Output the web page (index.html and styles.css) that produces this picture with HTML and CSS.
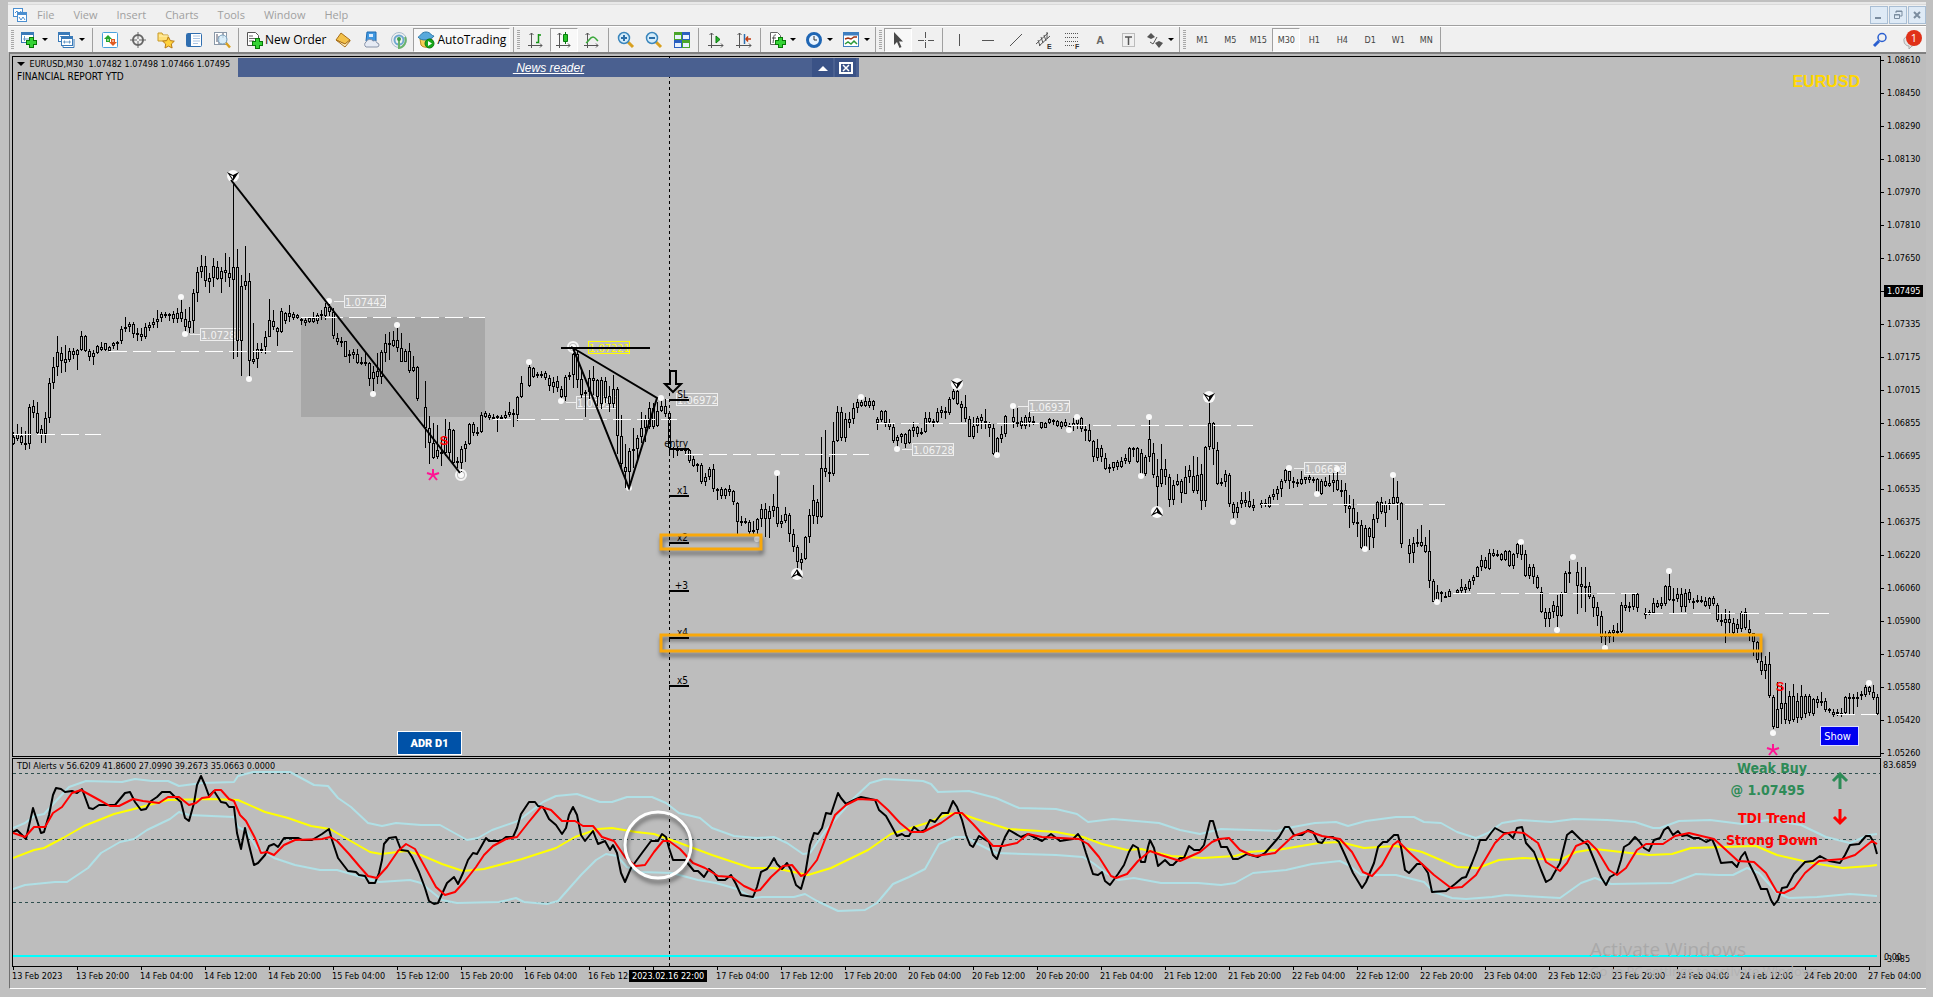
FILE: index.html
```html
<!DOCTYPE html>
<html lang="en">
<head>
    <meta charset="utf-8">
    <title>EURUSD,M30</title>
    <link rel="stylesheet" href="styles.css">
</head>
<body>
    <header class="app-bar">
        <nav class="menu">
            <svg class="app-icon" width="14" height="14" viewBox="0 0 14 14" fill="#fff" stroke="#4b8fd0"><rect x=".5" y=".5" width="9" height="8"/><path d="M2 5l2-2 2 3 2-3" fill="none"/><rect x="4.500" y="4.500" width="9" height="9"/><path d="M4 6h10" stroke-width="2"/><path d="M6 9l2 3 2-3 2 3" fill="none"/></svg>
            <a href="#">File</a>
            <a href="#">View</a>
            <a href="#">Insert</a>
            <a href="#">Charts</a>
            <a href="#">Tools</a>
            <a href="#">Window</a>
            <a href="#">Help</a>
            <div class="win-controls">
                <button aria-label="Minimize"><svg width="12" height="12"><path d="M2 9h6" stroke="#7b8da0" stroke-width="2"/></svg></button>
                <button aria-label="Restore"><svg width="12" height="12" fill="none" stroke="#7b8da0"><path d="M4 4V2h6v5H8M4 2.500h6"/><path d="M2.500 5.500h5v4h-5zM2 6h6"/></svg></button>
                <button aria-label="Close"><svg width="12" height="12"><path d="M3 3l6 6M9 3l-6 6" stroke="#7b8da0" stroke-width="2"/></svg></button>
            </div>
        </nav>

        <div class="toolbars">
            <div class="toolbar">
                <button class="tool drop" aria-label="New chart"><svg width="18" height="18"><rect x="1.500" y="1.500" width="12" height="10" fill="#fff" stroke="#3a7ab8"/><path d="M1 3h13" stroke="#3a7ab8" stroke-width="2"/><path d="M4.500 5v5M3 8h6" stroke="#6a9cc8"/><path d="M11.500 6v11M6 11.500h11" stroke="#087808" stroke-width="5"/><path d="M11.500 7v9M7 11.500h9" stroke="#35d335" stroke-width="3"/></svg></button>
                <button class="tool drop" aria-label="Profiles"><svg width="18" height="18" fill="#fff" stroke="#3a7ab8"><rect x="1.500" y="1.500" width="11" height="9"/><path d="M1 3h12" stroke-width="2"/><path d="M6 14v2.500h11V8" /><rect x="4.500" y="5.500" width="11" height="9"/><path d="M4 7h12" stroke-width="2"/><path d="M3 5.500h1M6 11h8M7.500 9.500v3M12.500 9.500v3" stroke="#6a9cc8"/></svg></button>
                <i class="sep"></i>
                <button class="tool" aria-label="Market Watch"><svg width="18" height="18"><rect x="1.500" y="1.500" width="15" height="15" rx="1" fill="#fff" stroke="#4ba0dc"/><path d="M7 4l4 4H9v3H5V8H3z" fill="#25a52a"/><path d="M10 8h4v3h2l-4 4-4-4h2z" fill="#e05a20"/><path d="M6 9h2M11 10h2" stroke="#fff"/></svg></button>
                <button class="tool" aria-label="Data Window"><svg width="18" height="18" fill="none" stroke="#666"><circle cx="9" cy="9" r="5" stroke-width="2"/><path d="M9 1v7M9 10v7M1 9h7M10 9h7"/></svg></button>
                <button class="tool" aria-label="Navigator"><svg width="18" height="18"><path d="M1 2h4l1 2h5v6H1z" fill="#ffe07a" stroke="#c89a28"/><path d="M2 5h9" stroke="#fff2b8"/><path d="M11.500 6l1.800 3.600 4 .6-3 2.800.8 4-3.600-1.900L8 17l.7-4-3-2.800 4-.6z" fill="#ffd23c" stroke="#b87a14"/></svg></button>
                <button class="tool" aria-label="Terminal"><svg width="18" height="18"><rect x="1.500" y="2.500" width="15" height="13" rx="1" fill="#fff" stroke="#2f6eb0"/><path d="M4 3v12" stroke="#2f6eb0" stroke-width="4"/><path d="M8 5h7M8 7.500h7M8 10h7M8 12.500h5" stroke="#a8c4e4"/></svg></button>
                <button class="tool" aria-label="Strategy Tester"><svg width="18" height="18"><rect x="1.500" y="1.500" width="12" height="12" fill="#fff" stroke="#8a98a8"/><path d="M4 3v8M6 5v8M10 2v5" stroke="#556"/><circle cx="9.500" cy="8.500" r="4.500" fill="#cfe8f8" fill-opacity=".8" stroke="#7aa0bc"/><path d="M13 12l4 4.500" stroke="#d8a020" stroke-width="2.500"/></svg></button>
                <i class="sep"></i>
                <button class="tool wide"><svg width="18" height="18"><path d="M2.500 1.500h8l3 3v10h-11z" fill="#fff" stroke="#555"/><path d="M4 5h4M4 7.500h7M4 10h5" stroke="#666"/><path d="M12.500 7v11M7 12.500h11" stroke="#087808" stroke-width="5"/><path d="M12.500 8v9M8 12.500h9" stroke="#35d335" stroke-width="3"/></svg>New Order</button>
                <button class="tool" aria-label="MetaEditor"><svg width="18" height="18"><path d="M2 9l5-7 9 7-5 4z" fill="#f3c14a" stroke="#a9701a"/><path d="M2 9l9 7 5-6v-1l-5 4z" fill="#fff0c0" stroke="#a9701a"/></svg></button>
                <button class="tool" aria-label="Cloud storage"><svg width="18" height="18"><path d="M5 1h9v9H4z" fill="#3f97e0" stroke="#1f6bb0"/><path d="M7 3h4v3H7z" fill="#d8ecff"/><path d="M4 16a3 3 0 0 1 0-5 4 4 0 0 1 7-1 3 3 0 0 1 4 2 2 2 0 0 1 0 4z" fill="#e6ebf4" stroke="#8893a8"/></svg></button>
                <button class="tool" aria-label="Signals"><svg width="18" height="18" fill="none"><circle cx="9" cy="9" r="7.500" stroke="#a8bccc"/><circle cx="9" cy="9" r="4.500" stroke="#6fa8d0" stroke-width="2"/><path d="M9 9v8a8 8 0 0 0 6-11" stroke="#69b36c" stroke-width="2"/><circle cx="9" cy="8" r="2" fill="#3b9d4a"/></svg></button>
                <button class="tool wide pressed"><svg width="18" height="18"><path d="M3 8l1 6c2 3 8 3 10 0l1-6z" fill="#f5cf56" stroke="#b88a20"/><path d="M1 6c2 0 3-5 8-5s5 4 8 4c-2 4-13 6-16 1z" fill="#58a9dc" stroke="#2e78aa"/><circle cx="12.500" cy="12.500" r="4.500" fill="#18a818" stroke="#0a7a10"/><path d="M11 10v5l4-2.500z" fill="#fff"/></svg>AutoTrading</button>
            </div>

            <div class="toolbar">
                <button class="tool" aria-label="Bar chart"><svg width="18" height="18" fill="none" stroke="#555"><path d="M4.500 2v15M1 14.500h14M2.500 4l2-2 2 2M13 12.500l2 2-2 2"/><path d="M11.500 3v9M11 4h3M9 11.500h3" stroke="#159415" stroke-width="1.500"/></svg></button>
                <button class="tool pressed" aria-label="Candlesticks"><svg width="18" height="18" fill="none" stroke="#555"><path d="M4.500 2v15M1 14.500h14M2.500 4l2-2 2 2M13 12.500l2 2-2 2"/><path d="M10.500 1v12" stroke="#0a7a10"/><path d="M8.500 3.500h4v7h-4z" fill="#27c427" stroke="#0a7a10"/></svg></button>
                <button class="tool" aria-label="Line chart"><svg width="18" height="18" fill="none" stroke="#555"><path d="M4.500 2v15M1 14.500h14M2.500 4l2-2 2 2M13 12.500l2 2-2 2"/><path d="M3 12c3-2 4-6 7-6 2 0 3 2 5 4" stroke="#3aa83a" stroke-width="1.500"/></svg></button>
                <i class="sep"></i>
                <button class="tool" aria-label="Zoom in"><svg width="18" height="18"><path d="M11 11l5 5" stroke="#d8a020" stroke-width="3"/><circle cx="7" cy="7" r="5.500" fill="#d4ecfa" stroke="#3a86bc" stroke-width="1.500"/><path d="M4 7h6M7 4v6" stroke="#2b6fa8" stroke-width="2"/></svg></button>
                <button class="tool" aria-label="Zoom out"><svg width="18" height="18"><path d="M11 11l5 5" stroke="#d8a020" stroke-width="3"/><circle cx="7" cy="7" r="5.500" fill="#d4ecfa" stroke="#3a86bc" stroke-width="1.500"/><path d="M4 7h6" stroke="#2b6fa8" stroke-width="2"/></svg></button>
                <button class="tool" aria-label="Tile windows"><svg width="18" height="18"><path d="M1 1h8v8H1zM9 9h8v8H9z" fill="#4aa52a"/><path d="M9 1h8v8H9zM1 9h8v8H1z" fill="#2a5fc0"/><path d="M2 4h6v4H2zM10 4h6v4h-6zM2 12h6v4H2zM10 12h6v4h-6z" fill="#e8f2ff"/></svg></button>
                <i class="sep"></i>
                <button class="tool" aria-label="Auto scroll"><svg width="18" height="18" fill="none" stroke="#555"><path d="M4.500 2v15M1 14.500h15M2.500 4l2-2 2 2M14 12.500l2 2-2 2"/><path d="M9 5l4 3.500L9 12z" fill="#27b427" stroke="#0a7a10"/></svg></button>
                <button class="tool" aria-label="Chart shift"><svg width="18" height="18" fill="none" stroke="#555"><path d="M4.500 2v15M1 14.500h15M2.500 4l2-2 2 2M14 12.500l2 2-2 2"/><path d="M9.500 3v10" stroke="#2a6fb0" stroke-width="1.500"/><path d="M16 8h-5M13 5.500L11 8l2 2.500" stroke="#c03a10" stroke-width="1.500"/></svg></button>
                <i class="sep"></i>
                <button class="tool drop" aria-label="Indicators"><svg width="18" height="18"><path d="M2.500 1.500h7l3 3v9h-10z" fill="#fff" stroke="#666"/><path d="M8 4c-3-1-2 3-3 8M4 7h4" fill="none" stroke="#555"/><path d="M12.500 6v11M7 11.500h11" stroke="#087808" stroke-width="5"/><path d="M12.500 7v9M8 11.500h9" stroke="#35d335" stroke-width="3"/></svg></button>
                <button class="tool drop" aria-label="Periods"><svg width="18" height="18"><circle cx="9" cy="9" r="6.500" fill="#e8f4ff" stroke="#1f66b4" stroke-width="3"/><path d="M9 5v4h3" fill="none" stroke="#333"/></svg></button>
                <button class="tool drop" aria-label="Templates"><svg width="18" height="18" fill="none"><rect x="1.500" y="1.500" width="15" height="14" fill="#fff" stroke="#3f7fc0"/><path d="M1 3h16" stroke="#3f7fc0" stroke-width="3"/><path d="M3 8l3-1 3 1 3-2h3" stroke="#a03010" stroke-width="1.500"/><path d="M3 13l3-2 3 2 3-3 3 3" stroke="#2b9a3a" stroke-width="1.500"/></svg></button>
            </div>

            <div class="toolbar">
                <button class="tool pressed" aria-label="Cursor"><svg width="18" height="18"><path d="M5 1v13l3-3 2.500 6 2-1-2.500-5.500h4z" fill="#4a4a4a"/></svg></button>
                <button class="tool" aria-label="Crosshair"><svg width="18" height="18" stroke="#555"><path d="M8.500 1v6M8.500 11v6M1 9.500h6M11 9.500h6M8 9.500h1"/></svg></button>
                <i class="sep"></i>
                <button class="tool" aria-label="Vertical line"><svg width="18" height="18" stroke="#555"><path d="M8.500 3v12"/></svg></button>
                <button class="tool" aria-label="Horizontal line"><svg width="18" height="18" stroke="#555"><path d="M3 9.500h12"/></svg></button>
                <button class="tool" aria-label="Trendline"><svg width="18" height="18" stroke="#555"><path d="M3 15L15 3"/></svg></button>
                <button class="tool" aria-label="Equidistant channel"><svg width="18" height="18" stroke="#555"><path d="M1 13L13 2M4 15L15 5M3 9l2 6M6 6l2 6M9 4l2 6M12 1v7"/><text class="mini" x="12" y="18">E</text></svg></button>
                <button class="tool" aria-label="Fibonacci retracement"><svg width="18" height="18" stroke="#555" stroke-dasharray="1 1"><path d="M2 2.500h14M2 6.500h14M2 10.500h14M2 14.500h9"/><text class="mini" x="12" y="18">F</text></svg></button>
                <button class="tool letter">A</button>
                <button class="tool" aria-label="Text label"><svg width="18" height="18" fill="none" stroke="#888"><rect x="3.500" y="2.500" width="12" height="13" stroke-dasharray="1 1"/><path d="M6 6h7M9.500 6v8" stroke="#555" stroke-width="1.500"/></svg></button>
                <button class="tool drop" aria-label="Arrows"><svg width="18" height="18" fill="#555"><path d="M5 2l4 4-4 2-4-2zM13 10l4 2-4 5-4-5z"/><path d="M4 11l3 2 4-7" fill="none" stroke="#555"/></svg></button>
            </div>

            <div class="toolbar periods">
                <button class="tool">M1</button>
                <button class="tool">M5</button>
                <button class="tool">M15</button>
                <button class="tool pressed">M30</button>
                <button class="tool">H1</button>
                <button class="tool">H4</button>
                <button class="tool">D1</button>
                <button class="tool">W1</button>
                <button class="tool">MN</button>
            </div>

            <div class="status">
                <button class="tool" aria-label="Search"><svg width="18" height="18" fill="none" stroke="#2a5fd0"><circle cx="11" cy="6.500" r="4" stroke-width="1.500"/><path d="M8 10l-5 5" stroke-width="3"/></svg></button>
                <button class="tool note" aria-label="Notifications"><svg width="18" height="18"><path d="M1 10a6 4 0 0 1 12-2 5 5 0 0 1-4 7l-3 3v-3a5 5 0 0 1-5-5z" fill="#e4e4e4" stroke="#aaa"/></svg><span class="badge">1</span></button>
            </div>
        </div>
    </header>

    <main class="chart-window">
        <section class="pane price">
            <svg class="plot"><g id="price" transform="translate(-13,-57)"></g></svg>
            <div class="legend">
                <p><svg width="8" height="5"><path d="M0 0h8L4 4z"/></svg> EURUSD,M30&nbsp; 1.07482 1.07498 1.07466 1.07495</p>
                <p class="report">FINANCIAL REPORT YTD</p>
            </div>
            <div class="news">
                <a href="#">&nbsp;News reader</a>
                <button aria-label="Collapse"><svg width="12" height="12"><path d="M1 9h10L6 4z" fill="#fff"/></svg></button>
                <button aria-label="Close news"><svg width="14" height="12" fill="none" stroke="#fff"><rect x="1" y="1" width="12" height="10" stroke-width="2"/><path d="M4 3l6 6M10 3l-6 6" stroke-width="1.500"/></svg></button>
            </div>
            <div class="symbol">EURUSD</div>
            <button class="adr">ADR D1</button>
            <button class="show">Show</button>
        </section>
        <ol class="price-axis" id="price-axis"></ol>

        <section class="pane tdi">
            <svg class="plot"><g id="tdi" transform="translate(-13,-759)"></g></svg>
            <div class="legend">
                <p>TDI Alerts v 56.6209 41.8600 27.0990 39.2673 35.0663 0.0000</p>
            </div>
            <div class="signals">
                <div class="signal buy"><p>Weak Buy</p><p>@ 1.07495&nbsp;&nbsp;</p></div>
                <svg class="buy" width="18" height="18" fill="none"><path d="M9 17V3M2 9l7-7 7 7" stroke="#2e8b57" stroke-width="3"/></svg>
                <div class="signal sell"><p>TDI Trend</p><p>Strong Down</p></div>
                <svg class="sell" width="18" height="18" fill="none"><path d="M9 1v14M3 9l6 6 6-6" stroke="red" stroke-width="3"/></svg>
            </div>
            <div class="watermark"><p>Activate Windows</p><p>Go to PC settings to activate Windows.</p></div>
        </section>
        <div class="tdi-axis"><span>83.6859</span><span class="zero">0.00</span><span class="low">-3.985</span></div>

        <div class="time-axis">
            <ol id="time-axis"></ol>
            <span class="cursor-time">2023.02.16 22:00</span>
        </div>
    </main>
    <script src="chart.js"></script>
</body>
</html>
```
FILE: styles.css
```css
* { box-sizing: border-box; }
body { margin: 0; height: 100vh; padding: 2px 7px 8px 8px; display: flex; flex-direction: column; background: #c0c0c0; font-family: "DejaVu Sans Condensed", "DejaVu Sans", sans-serif; font-size: 9px; color: #000; overflow: hidden; }
p, ol { margin: 0; padding: 0; list-style: none; }
button { margin: 0; padding: 0; border: 0; background: none; font: inherit; color: inherit; }

/* menu and toolbars */
.app-bar { background: #f0f0f0; border-top: 2px solid #e8e8e8; box-shadow: inset 0 1px #dadada; }
.menu { height: 22px; display: flex; align-items: center; gap: 19px; padding-left: 5px; border-bottom: 1px solid #a0a0a0; font: 11px "Open Sans", sans-serif; }
.menu a { color: #a0a0a0; text-decoration: none; }
.app-icon { margin-right: -9px; }
.win-controls { margin-left: auto; display: flex; gap: 1px; }
.win-controls button { width: 18px; height: 18px; border: 1px solid #a9bed4; background: #deeaf6; display: grid; place-items: center; }
.toolbars { height: 26px; display: flex; border-top: 1px solid #fff; }
.toolbar { display: flex; align-items: center; border-right: 1px solid #a0a0a0; }
.toolbar:first-child { padding-right: 3px; }
.toolbar::before { content: ""; width: 3px; height: 20px; margin: 0 2px 0 3px; background: repeating-linear-gradient(#a8a8a8 0 1px, #f0f0f0 1px 2px); }
.tool { width: 28px; height: 24px; display: flex; align-items: center; justify-content: center; font: 11px "Open Sans", sans-serif; flex: none; }
.tool.wide { width: auto; gap: 2px; padding: 0 3px; font-size: 12px; }
.tool.pressed { border: 1px solid #a0a0a0; border-right-color: #fff; border-bottom-color: #fff; background: #f8f8f8; }
.tool.drop { width: 37px; justify-content: flex-start; gap: 4px; padding-left: 4px; }
.tool.drop::after { content: ""; border: 3px solid transparent; border-top: 3px solid #000; border-bottom: 0; }
.tool.letter { font: bold 11px "Liberation Sans", sans-serif; color: #666; }
.mini { font: bold 7px "Liberation Sans", sans-serif; fill: #333; stroke: none; }
.sep { width: 1px; height: 24px; margin: 0 3px 0 2px; background: #a0a0a0; }
.periods .tool { font: 9px "DejaVu Sans Condensed", sans-serif; color: #444; }
.status { margin-left: auto; display: flex; align-items: center; gap: 4px; }
.note { position: relative; }
.badge { position: absolute; right: 4px; top: 2px; width: 16px; height: 16px; border-radius: 8px; background: #e03018; color: #fff; font: 11px/16px "Open Sans", sans-serif; text-align: center; }

/* chart window */
.chart-window { flex: 1; min-height: 0; margin-left: 1px; padding: 2px 0 0 2px; border-top: 2px solid #808080; border-left: 1px solid #707070; border-bottom: 1px solid #fff; background: #bdbdbd; display: grid; grid-template-columns: minmax(0, 1fr) 45px; grid-template-rows: minmax(0, 1fr) 209px 21px; }
.pane { position: relative; border: 1px solid #000; }
.price { margin-bottom: 1px; }
.plot { position: absolute; width: 100%; height: 100%; overflow: hidden; }
.legend { position: relative; padding: 0 4px; line-height: 14px; width: max-content; }
.legend svg { margin-right: 2px; }
.report { font-size: 10px; line-height: 12px; }
.news { position: absolute; left: 225px; top: 1px; width: 621px; height: 19px; display: flex; align-items: center; gap: 2px; padding: 0 3px 0 1px; background: #4a6090; }
.news a { flex: 1; padding-left: 48px; text-align: center; color: #fff; font: italic 12px "Liberation Sans", sans-serif; text-decoration: underline; }
.news button { width: 21px; height: 19px; display: grid; place-items: center; background: #3a5286; }
.symbol { position: absolute; right: 20px; top: 16px; color: #ffd700; font: bold 16px "Liberation Sans", sans-serif; }
.adr { position: absolute; left: 384px; bottom: 1px; width: 65px; height: 24px; border: 1px solid #fff; background: #0052a8; color: #fff; font: 900 11px Roboto, sans-serif; }
.show { position: absolute; right: 21px; bottom: 10px; width: 39px; height: 20px; padding-right: 4px; border: 1px solid #e0e0ff; background: #0000f0; color: #fff; font-size: 11px; }

/* axes */
.price-axis li { position: relative; height: 33px; padding-left: 6px; line-height: 9px; }
.price-axis li::before { content: ""; position: absolute; left: 0; top: 4px; width: 3px; height: 1px; background: #000; }
.price-axis .bid span { background: #000; color: #fff; margin: 0 0 0 -3px; padding: 1px 3px; }
.tdi-axis { position: relative; padding-left: 2px; }
.tdi-axis span { line-height: 14px; }
.tdi-axis .zero, .tdi-axis .low { position: absolute; left: 3px; bottom: 3px; }
.tdi-axis .low { bottom: 1px; }
.time-axis { position: relative; grid-column: 1 / 3; }
.time-axis ol { display: flex; }
.time-axis li { flex: 0 0 64px; padding-top: 3px; line-height: 13px; white-space: nowrap; background: linear-gradient(#000, #000) 1px 0 / 1px 3px no-repeat; }
.cursor-time { position: absolute; left: 617px; top: 3px; padding: 0 3px; line-height: 12px; background: #000; color: #fff; white-space: nowrap; }

/* indicator texts */
.signals { position: absolute; right: 31px; top: -2px; display: grid; grid-template-columns: 98px 18px; gap: 6px 10px; }
.signal { font-weight: bold; font-size: 14px; line-height: 22px; text-align: center; white-space: nowrap; }
.signals svg { margin-top: 15px; }
.signals svg.sell { margin-top: 1px; }
.signal.buy { color: #2e8b57; }
.signal.sell { color: #f00; }
.watermark { position: absolute; right: 37px; bottom: -14px; width: 253px; color: #a9a9a9; font: 13px/18px "Open Sans", sans-serif; z-index: 1; }
.watermark p:first-child { font-size: 19px; line-height: 26px; }
.watermark p:last-child { color: #b2b2b2; white-space: nowrap; }

/* drawn on the plots */
.bar { fill: #bdbdbd; stroke: #000; shape-rendering: crispEdges; }
.wick, .level, .cross, .grid { stroke: #000; shape-rendering: crispEdges; }
.level { stroke-width: 2; }
.cross { stroke-dasharray: 3 3; }
.grid { stroke: #2f4f4f; stroke-dasharray: 3 3; }
.open-line { stroke: #fff; stroke-dasharray: 18 6; shape-rendering: crispEdges; }
.zone { fill: #a8a8a8; }
.dot { fill: #fafafa; }
.ring { fill: none; stroke: #f4f4f4; stroke-width: 2; }
.tag { fill: none; stroke: #eee; shape-rendering: crispEdges; }
.tag-text { fill: #f2f2f2; font-size: 11px; }
.tag.hot { stroke: #ff0; }
.tag-text.hot { fill: #ff0; }
.trend { fill: none; stroke: #000; stroke-width: 2; }
.level-text { font-size: 10px; text-anchor: end; }
.sell-mark { fill: #f00; font: bold 13px "Liberation Sans", sans-serif; text-anchor: middle; }
.star { fill: none; stroke: #ff1493; stroke-width: 2; }
.box { fill: none; stroke: #f9a80a; stroke-width: 3; filter: drop-shadow(1px 4px 2px rgba(0, 0, 0, .5)); }
.halo { fill: none; stroke: #fff; stroke-width: 3; filter: drop-shadow(1px 4px 2px rgba(0, 0, 0, .5)); }
.series { fill: none; stroke-width: 2; stroke-linejoin: round; }
.band { stroke: #b0e0e6; }
.mid { stroke: #ff0; }
.fast { stroke: #000; }
.slow { stroke: #f00; }
.zero-line { stroke: #0ff; stroke-width: 2; }
```
FILE: chart.js
```js
// Bars are high,top,bottom,low in thirds of a pixel below the base, 4px apart. "-" is a missing bar.
var runs = [
    { x: 13, base: 150, bars: '845,860,882,885 822,852,866,873 830,858,880,885 843,878,882,900 762,770,882,896 750,768,788,805 757,790,848,855 825,838,855,880 787,805,852,878 685,700,805,818 622,650,698,718 558,607,650,678 592,610,633,668 585,627,638,665 595,602,630,637 595,602,615,628 597,600,616,660 543,558,600,602 555,557,603,605 598,603,622,632 600,610,622,645 585,588,610,613 577,590,600,603 578,580,600,603 588,592,603,606' },
    { x: 113, base: 150, bars: '577,580,588,597 573,576,583,600 527,538,573,583 502,530,538,545 517,522,530,545 515,522,553,565 535,550,555,573 535,553,562,573 520,532,562,568 515,525,533,543 505,517,525,533 480,507,517,533 485,492,503,515 485,493,498,503 488,492,498,512 483,492,508,520 475,490,508,520 445,485,508,515 478,507,532,545 472,512,535,548 418,430,512,550 352,367,430,455 316,349,367,383 318,349,394,412 368,384,395,428' },
    { x: 213, base: 150, bars: '324,349,384,412 333,350,386,390 352,362,388,428 308,360,370,395 320,370,384,410 100,352,390,627 298,352,574,620 375,407,574,678 287,394,407,420 370,394,632,680 520,628,636,642 580,598,628,655 578,597,602,610 543,560,590,612 447,510,560,562 480,512,532,540 530,533,547,588 475,484,547,548 485,488,513,522 465,490,500,517 485,493,505,510 492,495,505,508 503,507,510,525 505,510,518,527 500,505,515,520' },
    { x: 313, base: 150, bars: '485,503,515,518 488,495,513,522 480,493,497,510 460,470,497,510 463,470,487,497 475,485,557,567 548,563,577,586 560,572,577,592 572,573,620,622 600,612,618,640 598,605,616,628 598,613,640,642 622,635,640,645 608,635,640,648 635,640,687,707 648,665,687,722 610,663,682,703 600,607,680,703 552,580,610,635 547,578,584,630 543,570,588,592 533,570,595,605 548,595,635,637 597,604,635,637 580,603,662,668 618,652,662,667 648,652,746,752' },
    { x: 425, base: 150, bars: '692,772,833,893 798,833,878,942 820,878,924,928 825,900,920,928 870,905,912,948 807,862,908,918 815,838,910,930 838,840,940,943 920,934,940,953 888,898,938,965 872,883,898,935 820,823,883,885 815,823,848,858 830,845,848,857 785,795,845,848 783,790,800,805 790,795,805,810 793,800,808,810 795,797,805,845' },
    { x: 501, base: 300, bars: '345,350,357,360 333,345,353,358 307,335,345,352 328,340,345,380 288,292,345,362 228,250,292,293 - 195,202,257,262 200,203,230,235 215,223,227,235 213,223,227,235 212,220,235,240 225,235,258,272 232,247,260,280 227,243,265,275 257,268,292,297 225,232,292,303 217,225,232,240 155,162,226,265 150,162,240,265 205,238,285,293 270,275,278,350 210,235,275,297 198,235,242,285 237,240,290,318' },
    { x: 601, base: 300, bars: '230,240,313,328 230,243,295,310 258,287,313,335 225,267,313,325 262,267,408,463 345,408,493,508 432,500,515,563 445,452,515,563 385,447,452,505 405,413,448,485 335,385,412,430 345,358,385,427 305,325,382,388 308,325,380,387 305,332,378,380 298,318,333,337 297,318,342,350 335,340,445,465 440,445,450,475 442,446,450,468 445,447,449,452 445,447,449,465 447,450,482,488 468,478,497,500 488,493,498,515' },
    { x: 701, base: 300, bars: '490,495,547,552 520,530,547,558 500,507,530,540 493,508,568,577 565,568,573,600 560,568,588,597 565,568,588,598 555,568,575,588 570,573,607,615 605,608,665,702 648,663,668,678 655,663,667,673 660,665,697,705 663,690,697,703 655,658,690,705 613,628,658,682 610,628,658,710 618,632,658,713 583,618,632,650 520,620,673,680 645,663,673,683 620,642,663,670 640,645,703,725 687,703,742,755 735,742,785,810' },
    { x: 801, base: 300, bars: '760,778,788,815 708,712,778,780 627,645,712,728 555,600,648,673 597,605,652,673 412,505,650,655 390,505,515,530 470,515,522,547 365,423,522,527 318,337,423,427 322,337,415,422 340,357,415,425 337,357,370,385 310,325,357,372 297,305,325,340 292,305,318,322 290,303,318,320 293,303,318,323 300,303,318,330' },
    { x: 877, base: 360, bars: '170,177,190,210 150,152,180,185 150,152,188,200 178,188,200,210 190,200,242,250 225,232,242,262 218,223,232,250 220,223,252,265 208,211,250,253 187,200,212,232 198,202,222,232 205,215,222,225 155,175,215,218 155,175,185,190 178,184,188,200 145,157,187,190 138,150,158,175 140,152,157,178 110,118,160,165 85,92,118,120 82,92,133,135 122,132,145,185 105,142,178,187 167,178,230,232 170,197,230,237' },
    { x: 977, base: 360, bars: '168,175,198,218 163,172,183,207 147,182,190,207 187,192,205,232 192,205,282,285 230,235,282,285 197,222,237,248 165,168,222,232 - 143,172,187,203 145,185,190,200 170,182,197,207 165,172,197,207 157,172,187,200 168,182,187,195 - 185,187,205,207 185,188,203,205 175,178,190,193 177,180,186,195 180,183,197,200 182,187,200,208 178,187,197,200 190,198,202,215 175,188,198,212' },
    { x: 1077, base: 360, bars: '173,178,192,207 172,175,208,217 195,207,213,243 192,210,244,247 240,242,292,305 238,265,295,302 255,265,292,305 278,293,327,330 312,322,328,338 305,307,325,332 300,307,320,330 290,302,320,325 283,295,303,312 262,265,307,312 262,265,268,292 262,265,305,310 268,278,347,348 285,290,343,348 180,238,290,307 248,278,346,353 297,347,380,440 252,328,373,380 297,328,352,375 343,350,420,440 360,375,420,435' },
    { x: 1177, base: 360, bars: '343,362,375,378 358,362,400,428 318,352,402,403 315,330,352,368 288,347,393,400 290,345,393,403 313,343,422,450 257,262,422,440 125,190,262,270 187,190,268,315 245,270,373,375 355,365,373,378 330,343,367,382 338,345,432,440 425,433,458,475 427,440,458,475 395,420,432,445 395,420,430,440 392,422,440,445 418,435,443,453' },
    { x: 1261, base: 360, bars: '420,430,435,445 417,430,435,440 405,410,440,445 388,402,410,420 378,387,402,420 357,363,387,412 328,330,363,370 328,332,363,388 350,363,368,385 357,365,373,380 333,357,373,375 350,352,360,373 345,352,360,370 350,357,362,370 355,357,398,405 358,362,403,405 350,363,378,380 345,370,378,380 340,360,370,397 335,360,390,392 360,390,393,410 370,390,437,458 405,437,447,503 417,445,490,495 457,487,493,530' },
    { x: 1361, base: 440, bars: '240,255,325,328 255,265,325,328 262,265,292,330 222,238,293,325 182,185,238,250 170,185,215,222 183,192,218,262 178,190,195,210 110,172,193,195 122,172,188,240 185,188,313,325 - 297,315,342,368 290,308,340,370 268,305,310,320 255,307,317,322 290,315,335,340 270,333,422,445 417,422,485,487 435,457,482,485 452,457,463,487 455,467,472,475 448,452,470,472' },
    { x: 1457, base: 440, bars: '447,450,460,462 418,442,453,460 432,442,450,460 417,422,448,452 405,410,422,435 378,382,410,412 345,360,382,392 350,360,385,388 327,340,387,390 328,340,348,350 330,342,348,350 340,343,360,363 330,332,360,362 330,332,377,380 340,343,377,388 310,313,343,355 310,313,345,360 330,343,407,410 372,380,407,418 372,380,412,433 405,412,445,447 440,457,517,518 503,517,538,560 505,515,538,562 483,495,515,535' },
    { x: 1557, base: 440, bars: '465,497,527,560 455,458,528,530 392,400,460,462 362,395,400,430 - 365,395,437,522 380,432,440,503 382,437,442,515 427,437,472,477 465,472,503,532 487,502,527,558 513,527,592,610 572,585,592,615 570,575,592,610 555,570,578,605 550,572,577,588 487,495,577,580 460,495,505,512 487,498,505,515 460,463,502,510 460,463,505,515' },
    { x: 1645, base: 440, bars: '505,520,525,537 510,515,520,525 473,488,518,520 480,488,500,505 472,490,498,508 435,438,493,498 402,438,480,483 445,478,480,523 443,463,477,485 443,463,500,517 448,458,500,517 447,455,480,490 473,482,485,508 465,480,483,490 468,480,487,490 472,483,497,500 470,475,497,507 468,475,493,497 490,495,540,547 518,540,547,557 507,537,550,608 513,537,550,580 533,550,580,583 537,552,568,580 513,518,568,575' },
    { x: 1745, base: 440, bars: '505,517,565,570 540,568,580,603 578,580,607,647 603,607,660,670 613,663,692,705 647,672,692,717 637,673,768,775 765,770,860,868 725,808,863,865 735,790,808,853 730,790,840,853 752,767,842,853 733,767,840,845 758,782,833,850 735,767,833,840 763,767,822,833 763,767,820,827 775,778,822,827 767,778,790,805 757,783,790,797 773,782,810,817 803,808,812,820 808,815,825,830 807,815,822,827 803,818,822,830' },
    { x: 1845, base: 440, bars: '768,772,820,823 760,770,773,822 763,770,775,822 757,770,777,800 753,763,767,780 735,740,765,770 735,740,757,765 735,757,773,780 763,772,823,825' }
];

// day open lines: x1, x2, y
var opens = [[13, 101, 434], [109, 293, 351], [301, 485, 317], [493, 677, 419], [685, 869, 454], [877, 1039, 423], [1069, 1253, 425], [1261, 1445, 504], [1453, 1637, 593], [1645, 1829, 613], [1837, 1877, 714]];

var dots = [[181, 297], [185, 334], [249, 379], [329, 301], [373, 394], [397, 325], [461, 475], [529, 362], [561, 401], [573, 347], [629, 488], [661, 398], [757, 539], [777, 473], [861, 397], [897, 449], [997, 455], [1013, 406], [1069, 430], [1077, 417], [1141, 476], [1149, 417], [1233, 522], [1289, 468], [1337, 469], [1317, 494], [1393, 475], [1365, 549], [1437, 602], [1521, 542], [1557, 630], [1573, 557], [1605, 648], [1669, 571], [1773, 733], [1869, 683]];

// swing markers: x, y, direction
var swings = [[233, 176, 1], [797, 574, -1], [957, 384, 1], [1157, 512, -1], [1209, 397, 1]];

var tags = [[344, 301, '1.07442'], [200, 334, '1.07281'], [588, 347, '1.07221', 'hot'], [576, 402, '1.06951'], [676, 399, '1.06972'], [1028, 406, '1.06937'], [912, 449, '1.06728'], [1304, 468, '1.06638']];

var levels = [[400, 'SL'], [449, 'entry'], [496, 'x1'], [543, 'x2'], [591, '+3'], [638, 'x4'], [686, 'x5']];

var series = [
    ['band', '13,828 25,823 34,816 44,814 55,802 69,787 86,781 122,782 135,779 152,781 168,781 179,786 202,783 234,782 238,776 253,772 290,772 314,785 328,786 338,798 351,807 368,823 382,826 396,823 421,825 440,825 467,840 478,838 492,830 518,821 543,802 556,796 577,794 600,802 612,802 627,797 652,797 666,803 679,813 700,818 712,828 734,836 757,838 774,837 787,843 803,854 810,853 826,830 854,798 870,783 884,779 923,781 931,784 938,792 969,791 996,798 1019,808 1056,809 1077,814 1088,822 1113,819 1159,823 1180,830 1200,834 1221,829 1277,831 1293,827 1315,823 1336,822 1348,826 1366,821 1396,817 1414,817 1424,822 1441,823 1457,832 1476,838 1488,833 1502,823 1520,820 1551,822 1574,819 1607,820 1635,822 1653,828 1660,828 1679,821 1710,820 1742,824 1768,820 1801,825 1826,837 1850,843 1869,835 1877,834'],
    ['band', '13,889 25,885 55,882 67,882 88,868 101,853 120,842 134,839 147,830 170,819 179,812 189,815 234,817 238,827 246,831 257,848 274,858 295,865 320,870 337,870 358,876 379,882 410,880 421,883 442,900 457,903 499,902 516,898 524,902 547,904 558,901 581,875 596,860 606,854 617,856 627,867 640,872 672,873 698,880 716,883 737,889 753,898 762,897 794,897 805,894 817,901 838,911 865,910 877,903 893,884 909,877 925,869 939,844 955,837 966,837 976,843 996,853 1056,855 1083,857 1093,863 1106,873 1118,880 1134,878 1161,883 1198,883 1221,885 1235,883 1253,873 1286,870 1312,864 1340,861 1350,866 1361,875 1396,875 1424,882 1434,892 1452,898 1466,899 1492,897 1506,895 1560,898 1581,883 1595,878 1611,884 1672,883 1696,874 1719,875 1733,875 1747,868 1759,873 1777,893 1789,898 1817,897 1850,894 1877,896'],
    ['mid', '13,858 34,850 44,848 63,838 84,826 114,814 130,810 168,800 210,799 238,800 265,812 288,818 311,826 330,829 349,840 370,852 381,854 406,851 421,855 442,864 463,871 484,869 522,859 556,848 575,837 598,829 612,828 636,832 654,834 677,842 712,855 751,868 774,868 808,875 831,868 868,850 891,834 927,823 948,814 959,813 976,819 1008,829 1056,832 1083,837 1102,844 1127,850 1141,849 1171,856 1203,858 1235,856 1249,852 1277,850 1319,843 1340,842 1364,848 1396,846 1422,852 1457,867 1478,868 1499,860 1523,858 1560,860 1576,852 1595,849 1621,852 1649,855 1672,854 1691,848 1756,846 1777,855 1812,863 1843,868 1869,866 1877,865'],
    ['fast', '13,832 17,830 26,839 33,808 41,833 44,832 49,815 53,795 56,788 61,789 65,792 72,791 77,793 82,789 85,797 89,808 93,809 99,805 115,805 125,793 130,792 135,802 141,810 146,809 151,801 157,797 162,792 170,792 175,797 181,802 185,818 189,821 194,803 197,785 201,776 205,785 209,796 214,791 221,802 226,803 229,807 234,807 237,833 241,849 245,828 249,845 254,865 258,863 265,855 269,846 274,844 278,847 284,838 298,838 302,840 312,840 322,834 329,829 332,840 338,858 348,871 356,872 359,875 365,876 369,883 375,883 379,873 382,860 384,844 389,838 396,837 401,850 408,851 412,857 419,872 425,888 429,901 434,904 438,903 442,894 447,883 454,877 458,884 463,873 468,860 473,853 477,854 486,838 489,841 501,841 506,837 513,837 517,828 521,814 529,802 535,802 538,806 543,807 549,819 556,825 562,834 566,828 569,815 573,807 577,815 581,835 585,841 593,831 598,844 605,841 610,850 613,845 617,853 621,873 625,882 631,868 642,853 651,841 658,841 662,834 666,837 669,848 673,860 685,860 694,871 698,871 704,877 709,869 714,873 718,880 725,880 731,875 736,884 741,895 753,897 757,887 761,872 767,869 770,865 774,858 777,864 782,869 787,863 791,870 796,885 801,889 805,875 810,845 814,833 818,834 822,828 826,813 831,814 834,805 838,793 841,798 846,804 854,800 861,797 875,800 879,810 886,816 891,825 897,836 902,834 905,836 909,836 914,827 920,832 925,830 930,820 935,822 942,813 948,813 953,801 957,807 962,820 966,835 970,845 973,847 979,836 989,842 993,855 997,859 1001,847 1005,837 1009,830 1021,837 1028,834 1042,841 1051,834 1060,841 1073,839 1078,834 1082,840 1086,853 1093,874 1098,875 1102,872 1105,881 1110,885 1118,874 1124,865 1129,852 1133,845 1138,848 1141,862 1145,862 1148,847 1150,840 1154,848 1158,866 1165,860 1170,865 1173,865 1180,858 1184,858 1189,846 1194,850 1200,850 1204,845 1207,833 1210,821 1213,821 1217,835 1221,847 1227,847 1233,859 1238,859 1247,854 1258,857 1265,853 1272,845 1279,837 1285,827 1289,827 1294,835 1302,835 1308,830 1313,832 1318,842 1322,843 1326,837 1333,837 1339,842 1345,855 1353,873 1362,888 1366,882 1374,863 1378,847 1383,842 1387,842 1394,835 1398,835 1401,847 1405,870 1409,873 1417,864 1422,864 1428,873 1432,892 1446,891 1455,884 1462,878 1466,877 1472,863 1477,850 1480,840 1486,840 1491,833 1495,828 1504,833 1508,833 1513,838 1517,828 1522,827 1526,843 1534,852 1541,870 1546,882 1551,879 1556,870 1560,863 1564,847 1567,835 1572,831 1580,839 1588,845 1595,862 1601,877 1606,885 1610,877 1617,873 1621,860 1624,847 1629,844 1635,837 1639,841 1644,848 1649,851 1654,840 1660,838 1664,830 1668,827 1673,835 1678,831 1682,836 1687,835 1693,838 1699,838 1706,842 1712,839 1716,848 1721,863 1732,862 1737,867 1741,857 1745,852 1749,863 1755,875 1761,889 1767,889 1771,900 1774,905 1778,900 1782,888 1787,887 1794,874 1805,862 1813,861 1820,856 1829,861 1840,863 1845,855 1850,845 1859,844 1866,836 1870,836 1874,843 1877,854'],
    ['slow', '13,833 25,837 34,827 45,827 53,813 62,807 72,793 81,790 101,801 110,806 119,806 133,799 143,801 159,803 168,797 179,797 189,805 196,803 202,798 209,797 215,790 221,790 229,799 234,801 240,815 246,821 255,838 261,853 267,852 274,855 284,845 295,840 322,839 330,837 337,841 349,854 360,867 368,876 377,878 387,867 398,851 406,844 415,849 425,867 436,887 445,895 455,892 465,881 476,867 484,855 493,846 506,839 517,837 528,823 541,807 551,810 562,821 575,821 583,826 593,826 602,837 614,841 625,857 633,864 636,866 645,865 654,852 663,841 669,841 680,849 693,863 705,868 718,876 732,877 744,886 755,891 760,890 771,877 783,866 792,865 801,876 806,874 817,860 826,837 835,815 846,805 858,799 877,800 888,810 900,823 911,832 923,832 941,823 955,813 962,813 973,824 993,846 1003,846 1017,843 1028,834 1042,837 1079,839 1088,844 1099,857 1111,876 1116,878 1127,874 1138,861 1150,851 1161,855 1180,861 1200,852 1212,842 1219,839 1229,838 1240,850 1251,855 1256,856 1275,853 1293,836 1308,831 1322,836 1340,839 1352,852 1363,872 1372,876 1382,865 1393,845 1398,841 1410,853 1434,875 1451,888 1462,887 1476,875 1495,843 1504,834 1513,832 1524,833 1538,843 1546,862 1560,871 1567,863 1576,846 1588,841 1597,850 1609,870 1617,875 1626,868 1637,850 1646,844 1663,844 1675,836 1689,833 1714,839 1738,861 1754,862 1766,873 1777,892 1784,893 1794,888 1805,873 1819,861 1843,859 1855,855 1872,841 1877,844']
];

function line(cls, x1, y1, x2, y2) {
    return '<path class="' + cls + '" d="M' + x1 + ' ' + y1 + 'L' + x2 + ' ' + y2 + '"/>';
}

function circle(cls, x, y, r) {
    return '<circle class="' + cls + '" cx="' + x + '" cy="' + y + '" r="' + r + '"/>';
}

function star(x, y) {
    return [[0, -6], [6, -2], [4, 5], [-4, 5], [-6, -2]].map(function(p) {
        return line('star', x, y, x + p[0], y + p[1]);
    }).join('');
}

function drawPrice() {
    var out = '<rect class="zone" x="301" y="317" width="184" height="100"/>';

    tags.forEach(function(t) {
        var hot = t[3] || '';
        if (!hot) out += line('tag', t[0] - 10, t[1] + 0.5, t[0], t[1] + 0.5);
        out += '<rect class="tag ' + hot + '" x="' + (t[0] + 0.5) + '" y="' + (t[1] - 5.5) + '" width="41" height="12"/>';
        out += '<text class="tag-text ' + hot + '" x="' + (t[0] + 1) + '" y="' + (t[1] + 5) + '">' + t[2] + '</text>';
    });

    runs.forEach(function(run) {
        run.bars.split(' ').forEach(function(bar, i) {
            if (bar === '-') return;
            var x = run.x + i * 4;
            var y = bar.split(',').map(function(v) { return Math.round(run.base + v / 3); });
            out += line('wick', x + 0.5, y[0], x + 0.5, y[3]);
            out += '<rect class="bar" x="' + (x - 0.5) + '" y="' + (y[1] + 0.5) + '" width="2" height="' + Math.max(1, y[2] - y[1] - 1) + '"/>';
        });
    });

    opens.forEach(function(o) { out += line('open-line', o[0], o[2] + 0.5, o[1], o[2] + 0.5); });
    dots.forEach(function(d) { out += circle('dot', d[0], d[1], 3); });
    out += circle('ring', 461, 475, 5) + circle('ring', 573, 347, 5);
    swings.forEach(function(s) {
        var d = s[2];
        out += circle('dot', s[0], s[1], 6);
        out += '<path d="M' + (s[0] - 6) + ' ' + (s[1] - 4 * d) + 'l6 ' + 3 * d + 'l6 ' + -3 * d + 'l-6 ' + 9 * d + 'z"/>';
        out += '<path fill="#fff" d="M' + (s[0] - 3) + ' ' + (s[1] - d) + 'l3 ' + d + 'v' + 3 * d + 'z"/>';
    });

    out += line('trend', 231, 180, 460, 473);
    out += line('trend', 561, 348, 650, 348);
    out += '<path class="trend" d="M573 348L657 398L629 488z"/>';
    out += line('cross', 669.5, 57, 669.5, 757);
    levels.forEach(function(l) {
        out += line('level', 669, l[0], 689, l[0]);
        out += '<text class="level-text" x="688" y="' + (l[0] - 2) + '">' + l[1] + '</text>';
    });
    out += '<path fill="none" stroke="#000" stroke-width="2" d="M670 371h6v13h5l-8 8-8-8h5z"/>';
    out += '<rect class="box" x="661" y="535" width="100" height="14"/>';
    out += '<rect class="box" x="661" y="635" width="1100" height="16"/>';
    out += '<text class="sell-mark" x="444" y="445">S</text><text class="sell-mark" x="1780" y="691">S</text>';
    out += star(433, 475) + star(1773, 750);
    document.getElementById('price').innerHTML = out;
}

function drawTdi() {
    var out = '';
    [773, 839, 902].forEach(function(y) { out += line('grid', 13, y + 0.5, 1880, y + 0.5); });
    out += line('cross', 669.5, 759, 669.5, 966);
    series.forEach(function(s) { out += '<polyline class="series ' + s[0] + '" points="' + s[1] + '"/>'; });
    out += line('zero-line', 13, 956, 1877, 956);
    out += circle('halo', 658, 845, 33);
    document.getElementById('tdi').innerHTML = out;
}

function drawAxes() {
    var prices = '1.08610 1.08450 1.08290 1.08130 1.07970 1.07810 1.07650 1.07495 1.07335 1.07175 1.07015 1.06855 1.06695 1.06535 1.06375 1.06220 1.06060 1.05900 1.05740 1.05580 1.05420 1.05260'.split(' ');
    document.getElementById('price-axis').innerHTML = prices.map(function(p) {
        return '<li' + (p === '1.07495' ? ' class="bid"' : '') + '><span>' + p + '</span></li>';
    }).join('');

    var times = ['13 Feb 2023', '13 Feb 20:00'];
    [14, 15, 16, 17, 20, 21, 22, 23, 24].forEach(function(day) {
        ['04:00', '12:00', '20:00'].forEach(function(h) { times.push(day + ' Feb ' + h); });
    });
    times.push('27 Feb 04:00');
    document.getElementById('time-axis').innerHTML = times.map(function(t) { return '<li>' + t + '</li>'; }).join('');
}

drawPrice();
drawTdi();
drawAxes();
```
